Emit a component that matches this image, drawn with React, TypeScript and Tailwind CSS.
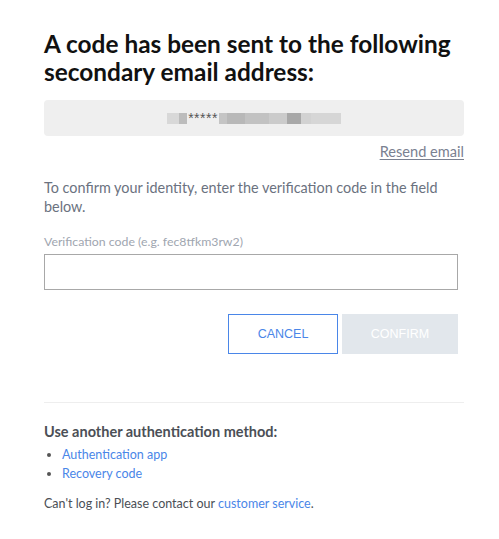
import React, { useState } from 'react';

const blur = (w: number, shade: string) => (
  <span className={`inline-block h-[11px] ${shade}`} style={{ width: w }} />
);

export default function App() {
  const [code, setCode] = useState('');

  return (
    <div className="min-h-[539px] w-[499px] bg-white font-['Lato',sans-serif]">
      <div className="px-[44px] pt-[30px]">
        <h1 className="w-[440px] text-[24.4px] font-bold leading-[28px] text-[#111]">
          A code has been sent to the following
          <br />
          secondary email address:
        </h1>

        {/* masked email */}
        <div className="mt-[14px] flex h-[36px] w-[420px] items-center justify-center rounded-[4px] bg-[#efefef]">
          <div className="flex items-center">
            {blur(12, 'bg-[#d8d8d8]')}
            {blur(8, 'bg-[#bcbcbc]')}
            <span className="px-[1px] font-['Liberation_Sans',sans-serif] text-[14px] leading-none tracking-[0.5px] text-[#555]">*****</span>
            {blur(8, 'bg-[#c4c4c4]')}
            {blur(18, 'bg-[#b8b8b8]')}
            {blur(24, 'bg-[#c2c2c2]')}
            {blur(18, 'bg-[#cbcbcb]')}
            {blur(14, 'bg-[#a8a8a8]')}
            {blur(10, 'bg-[#d2d2d2]')}
            {blur(30, 'bg-[#d6d6d6]')}
          </div>
        </div>

        <div className="mt-[6px] flex w-[420px] justify-end">
          <a href="#" className="text-[14.6px] leading-[20px] text-[#7a8191] underline underline-offset-2">
            Resend email
          </a>
        </div>

        <p className="mt-[16px] w-[420px] text-[14.4px] leading-[19px] text-[#6b7280]">
          To confirm your identity, enter the verification code in the field below.
        </p>

        <label className="mt-[18px] block text-[12.3px] leading-[16px] text-[#a0a6b0]">
          Verification code (e.g. fec8tfkm3rw2)
        </label>
        <input
          value={code}
          onChange={(e) => setCode(e.target.value)}
          className="mt-[4px] block h-[36px] w-[414px] border border-[#a8a8a8] px-3 text-[14px] outline-none"
        />

        <div className="mt-[24px] flex w-[414px] justify-end gap-[4px]">
          <button className="h-[40px] w-[110px] border border-[#4a86e8] bg-white font-['Liberation_Sans',sans-serif] text-[12.5px] text-[#4a86e8]">
            CANCEL
          </button>
          <button
            disabled={!code.trim()}
            className="h-[40px] w-[116px] bg-[#e2e7ec] font-['Liberation_Sans',sans-serif] text-[12.5px] text-white"
          >
            CONFIRM
          </button>
        </div>

        <div className="mt-[48px] h-px w-[420px] bg-[#eeeeee]" />

        <h2 className="mt-[19px] text-[14.5px] font-bold leading-[20px] text-[#4b4f56]">
          Use another authentication method:
        </h2>
        <ul className="mt-[3px] list-disc pl-[18px] text-[12.5px] leading-[19px] text-[#4a86e8] marker:text-[#555]">
          <li>
            <a href="#">Authentication app</a>
          </li>
          <li>
            <a href="#">Recovery code</a>
          </li>
        </ul>
        <p className="mt-[11px] text-[12.5px] leading-[19px] text-[#4b4f56]">
          Can't log in? Please contact our{' '}
          <a href="#" className="text-[#4a86e8]">
            customer service
          </a>
          .
        </p>
      </div>
    </div>
  );
}
